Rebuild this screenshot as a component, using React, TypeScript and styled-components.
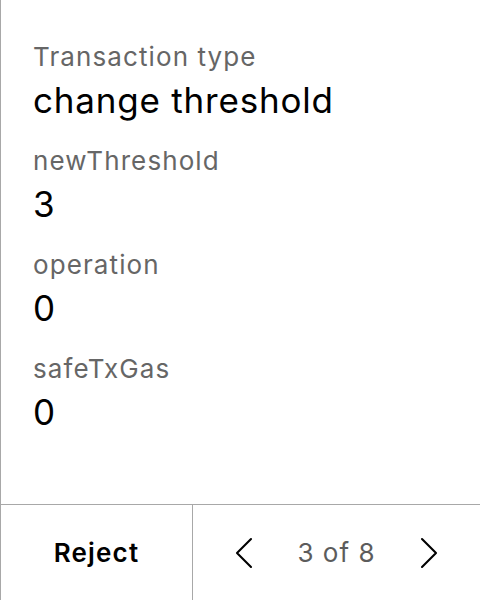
import React from 'react';
import styled, { createGlobalStyle } from 'styled-components';

const GlobalStyle = createGlobalStyle`
  html, body {
    margin: 0;
    padding: 0;
    background: #fff;
  }
  body {
    font-family: Inter, "Noto Sans", sans-serif;
  }
`;

type FieldType = {
  label: string
  value: string
}

const fields: FieldType[] = [
  { label: 'Transaction type', value: 'change threshold' },
  { label: 'newThreshold', value: '3' },
  { label: 'operation', value: '0' },
  { label: 'safeTxGas', value: '0' },
];

const Field = (props: FieldType) => {
  return (
    <StyledField>
      <Label>{props.label}</Label>
      <Value>{props.value}</Value>
    </StyledField>
  );
};

const Chevron = ({ dir }: { dir: 'left' | 'right' }) => (
  <svg width="18" height="32" viewBox="0 0 18 32" fill="none">
    <path
      d={dir === 'left' ? 'M16 2 L2 16 L16 30' : 'M2 2 L16 16 L2 30'}
      stroke="#000"
      strokeWidth="2.1"
      strokeLinecap="round"
      strokeLinejoin="round"
    />
  </svg>
);

export default function App() {
  return (
    <>
      <GlobalStyle />
      <Page>
        <Details>
          {fields.map((f) => (
            <Field key={f.label} label={f.label} value={f.value} />
          ))}
        </Details>
        <Footer>
          <RejectButton>Reject</RejectButton>
          <Pager>
            <ArrowButton aria-label="previous">
              <Chevron dir="left" />
            </ArrowButton>
            <PageCount>3 of 8</PageCount>
            <ArrowButton aria-label="next">
              <Chevron dir="right" />
            </ArrowButton>
          </Pager>
        </Footer>
      </Page>
    </>
  );
}

const Page = styled.div`
  width: 480px;
  height: 600px;
  box-sizing: border-box;
  border-left: 1px solid #a8a8a8;
  display: flex;
  flex-direction: column;
`;

const Details = styled.div`
  flex: 1;
  padding: 41px 32px 0;
  display: flex;
  flex-direction: column;
  gap: 23px;
`;

const StyledField = styled.div`
  display: flex;
  flex-direction: column;
  gap: 5px;
`;

const Label = styled.span`
  color: #666;
  font-size: 26px;
  line-height: 32px;
  letter-spacing: 1.1px;
`;

const Value = styled.span`
  color: #000;
  font-size: 35px;
  line-height: 44px;
  letter-spacing: 0.8px;
`;

const Footer = styled.div`
  height: 96px;
  box-sizing: border-box;
  border-top: 1px solid #a8a8a8;
  display: flex;
`;

const RejectButton = styled.button`
  width: 192px;
  border: none;
  border-right: 1px solid #a8a8a8;
  background: none;
  font-family: Inter, sans-serif;
  font-size: 26px;
  font-weight: 600;
  letter-spacing: 1.2px;
  color: #000;
  padding: 0;
`;

const Pager = styled.div`
  flex: 1;
  display: flex;
  align-items: center;
  justify-content: center;
  gap: 45px;
`;

const ArrowButton = styled.button`
  border: none;
  background: none;
  padding: 0;
  display: flex;
`;

const PageCount = styled.span`
  color: #5c5c5c;
  font-size: 26px;
  letter-spacing: 1px;
`;
